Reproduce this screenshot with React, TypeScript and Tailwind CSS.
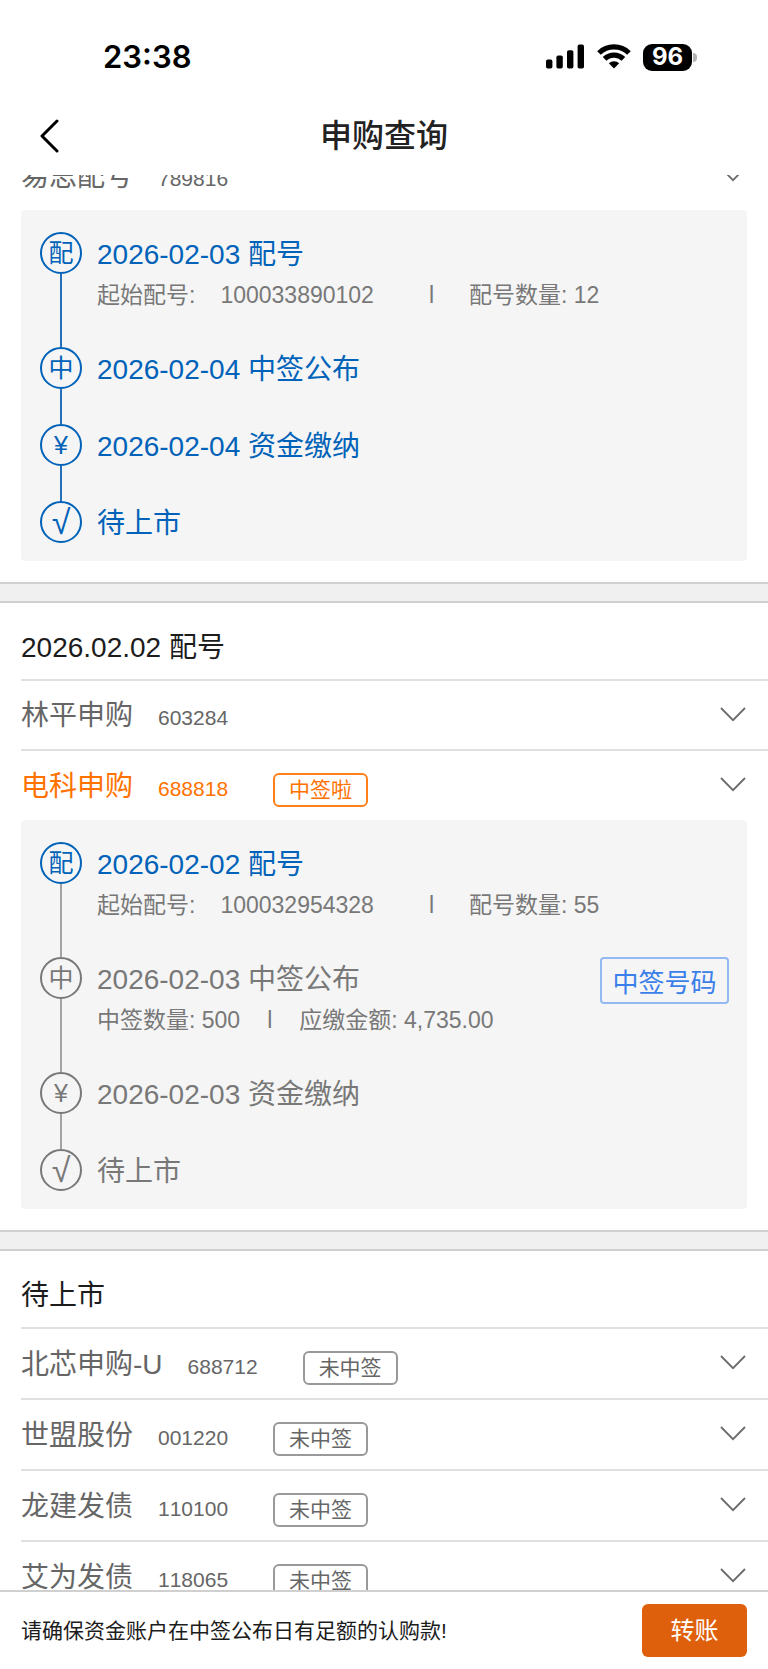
type Step = {
  icon: string
  title: string
  details?: string[]
  spaced?: boolean
  done: boolean
  action?: string
}

type Stock = {
  name: string
  code: string
  badge?: string
  won?: boolean
  steps?: Step[]
}

const firstStock: Stock = {
  name: "易思配号",
  code: "789816",
  steps: [
    { icon: "配", title: "2026-02-03 配号", details: ["起始配号:", "100033890102", "配号数量: 12"], spaced: true, done: true },
    { icon: "中", title: "2026-02-04 中签公布", done: true },
    { icon: "¥", title: "2026-02-04 资金缴纳", done: true },
    { icon: "√", title: "待上市", done: true },
  ],
}

const allotted: Stock[] = [
  { name: "林平申购", code: "603284" },
  {
    name: "电科申购",
    code: "688818",
    badge: "中签啦",
    won: true,
    steps: [
      { icon: "配", title: "2026-02-02 配号", details: ["起始配号:", "100032954328", "配号数量: 55"], spaced: true, done: true },
      { icon: "中", title: "2026-02-03 中签公布", details: ["中签数量: 500", "应缴金额: 4,735.00"], done: false, action: "中签号码" },
      { icon: "¥", title: "2026-02-03 资金缴纳", done: false },
      { icon: "√", title: "待上市", done: false },
    ],
  },
]

const pending: Stock[] = [
  { name: "北芯申购-U", code: "688712", badge: "未中签" },
  { name: "世盟股份", code: "001220", badge: "未中签" },
  { name: "龙建发债", code: "110100", badge: "未中签" },
  { name: "艾为发债", code: "118065", badge: "未中签" },
]

function StatusBar() {
  return (
    <div className="flex h-24 items-end justify-between pb-[22px] pl-[103px] pr-[71px]">
      <span className="font-[Inter,sans-serif] text-[31px] font-semibold leading-[34px] text-black">23:38</span>
      <div className="flex h-[34px] items-center gap-3">
        <svg width="39" height="26" viewBox="0 0 39 26" fill="#000" aria-hidden="true">
          <rect x="0" y="15.6" width="6.4" height="9" rx="1.8" />
          <rect x="10.4" y="11.4" width="6.4" height="13.2" rx="1.8" />
          <rect x="21" y="6.2" width="6.4" height="18.4" rx="1.8" />
          <rect x="31.6" y="0.6" width="6.4" height="24" rx="1.8" />
        </svg>
        <svg width="34" height="26" viewBox="0 0 34 26" fill="none" stroke="#000" strokeWidth="5.2" aria-hidden="true">
          <path d="M2 9 A21.6 21.6 0 0 1 32 9" />
          <path d="M7.6 14.9 A13.4 13.4 0 0 1 26.4 14.9" />
          <path d="M17 24.6 L11.8 19.3 A7.5 7.5 0 0 1 22.2 19.3 Z" fill="#000" stroke="none" />
        </svg>
        <div className="flex items-center gap-px">
          <span className="flex h-[27px] w-[49px] items-center justify-center rounded-[9px] bg-black font-[Inter,sans-serif] text-[24px] font-bold text-white">96</span>
          <span className="h-[9px] w-1 rounded-r-full bg-[#b4b4b4]" />
        </div>
      </div>
    </div>
  )
}

function Chevron() {
  return (
    <svg className="mb-0.5 ml-auto shrink-0" width="26" height="15" viewBox="0 0 26 15" fill="none" stroke="#6b6b6b" strokeWidth="1.8" aria-hidden="true">
      <path d="M1 1 L13 13.2 L25 1" />
    </svg>
  )
}

function Timeline({ steps }: { steps: Step[] }) {
  return (
    <ol className="mr-[21px] mb-[21px] rounded-[4px] bg-[#f5f5f5] pt-[22px] pr-[18px] pb-4 pl-[19px]">
      {steps.map((step, index) => {
        const last = index === steps.length - 1
        const nextDone = !last && steps[index + 1].done

        return (
          <li key={step.icon} className={`flex ${step.done ? "text-[#0062b8]" : "text-[#787878]"}`}>
            <div className="flex w-[42px] shrink-0 flex-col items-center">
              <span className={`flex h-[42px] w-[42px] items-center justify-center rounded-full border-2 border-current leading-none ${last ? "text-[34px]" : "text-[25px]"}`}>{step.icon}</span>
              {!last && <span className={`w-[2px] flex-1 ${nextDone ? "bg-[#2470b8]" : "bg-[#a3a3a3]"}`} />}
            </div>
            <div className={`ml-[15px] pt-0.5 ${last ? "" : "pb-[33px]"}`}>
              <h3 className="text-[28px] leading-[42px]">{step.title}</h3>
              {step.details && step.spaced && (
                <p className="flex text-[23px] leading-[38px] text-[#787878]">
                  <span>{step.details[0]}</span>
                  <span className="ml-[25px]">{step.details[1]}</span>
                  <span className="ml-[55px]">l</span>
                  <span className="ml-[35px]">{step.details[2]}</span>
                </p>
              )}
              {step.details && !step.spaced && (
                <p className="flex gap-[27px] text-[23px] leading-[38px] text-[#787878]">
                  <span>{step.details[0]}</span>
                  <span>l</span>
                  <span>{step.details[1]}</span>
                </p>
              )}
            </div>
            {step.action && (
              <button type="button" className="ml-auto h-[47px] w-[129px] rounded-[4px] border-2 border-[#93b8f2] pt-1 text-[26px] leading-none text-[#3a7fea]">
                {step.action}
              </button>
            )}
          </li>
        )
      })}
    </ol>
  )
}

function StockRow({ stock }: { stock: Stock }) {
  return (
    <div className="ml-[21px]">
      <button
        type="button"
        className={`flex w-full items-center border-t-2 border-[#e0e0e0] pr-[22px] ${stock.badge || stock.steps ? "h-[71px]" : "h-[70px]"} ${stock.won ? "text-[#ff7200]" : "text-[#666666]"}`}
      >
        <span className="flex items-baseline gap-[25px] pt-1">
          <span className="text-[28px] leading-[42px]">{stock.name}</span>
          <span className="text-[21px] leading-[42px]">{stock.code}</span>
        </span>
        {stock.badge && (
          <span className={`mt-2 ml-[45px] flex h-[34px] w-[95px] items-center justify-center rounded-[6px] border-2 text-[21px] leading-none ${stock.won ? "border-[#ff7f1a]" : "border-[#999999]"}`}>
            {stock.badge}
          </span>
        )}
        <Chevron />
      </button>
      {stock.steps && <Timeline steps={stock.steps} />}
    </div>
  )
}

function Group({ title, stocks }: { title: string; stocks: Stock[] }) {
  return (
    <section>
      <div className="h-[21px] border-y-2 border-[#d0d0d0] bg-[#f0f0f0]" />
      <h2 className="h-[76px] pt-6 pl-[21px] text-[28px] leading-[42px] text-[#1c1c1c]">{title}</h2>
      {stocks.map((stock) => (
        <StockRow key={stock.code} stock={stock} />
      ))}
    </section>
  )
}

export default function App() {
  return (
    <div className="flex h-screen flex-col bg-white font-['Liberation_Sans','Noto_Sans_CJK_SC',sans-serif] [font-kerning:none]">
      <header className="shrink-0">
        <StatusBar />
        <div className="grid h-[79px] grid-cols-[1fr_auto_1fr] items-center">
          <button type="button" aria-label="返回" className="ml-[39px] w-6">
            <svg width="22" height="34" viewBox="0 0 22 34" fill="none" stroke="#000" strokeWidth="3" strokeLinecap="round" strokeLinejoin="round">
              <path d="M18 2 L3 17 L18 32" />
            </svg>
          </button>
          <h1 className="text-[32px] font-medium text-[#222222]">申购查询</h1>
        </div>
      </header>

      <main className="min-h-0 flex-1 overflow-hidden">
        <div className="-mt-9">
          <StockRow stock={firstStock} />
          <Group title="2026.02.02 配号" stocks={allotted} />
          <Group title="待上市" stocks={pending} />
        </div>
      </main>

      <footer className="flex h-[79px] shrink-0 items-center justify-between border-t-2 border-[#d0d0d0] bg-white px-[21px]">
        <p className="text-[21px] text-[#1c1c1c]">请确保资金账户在中签公布日有足额的认购款!</p>
        <button type="button" className="h-[53px] w-[105px] rounded-[6px] bg-[#df600c] text-[24px] text-white">转账</button>
      </footer>
    </div>
  )
}
